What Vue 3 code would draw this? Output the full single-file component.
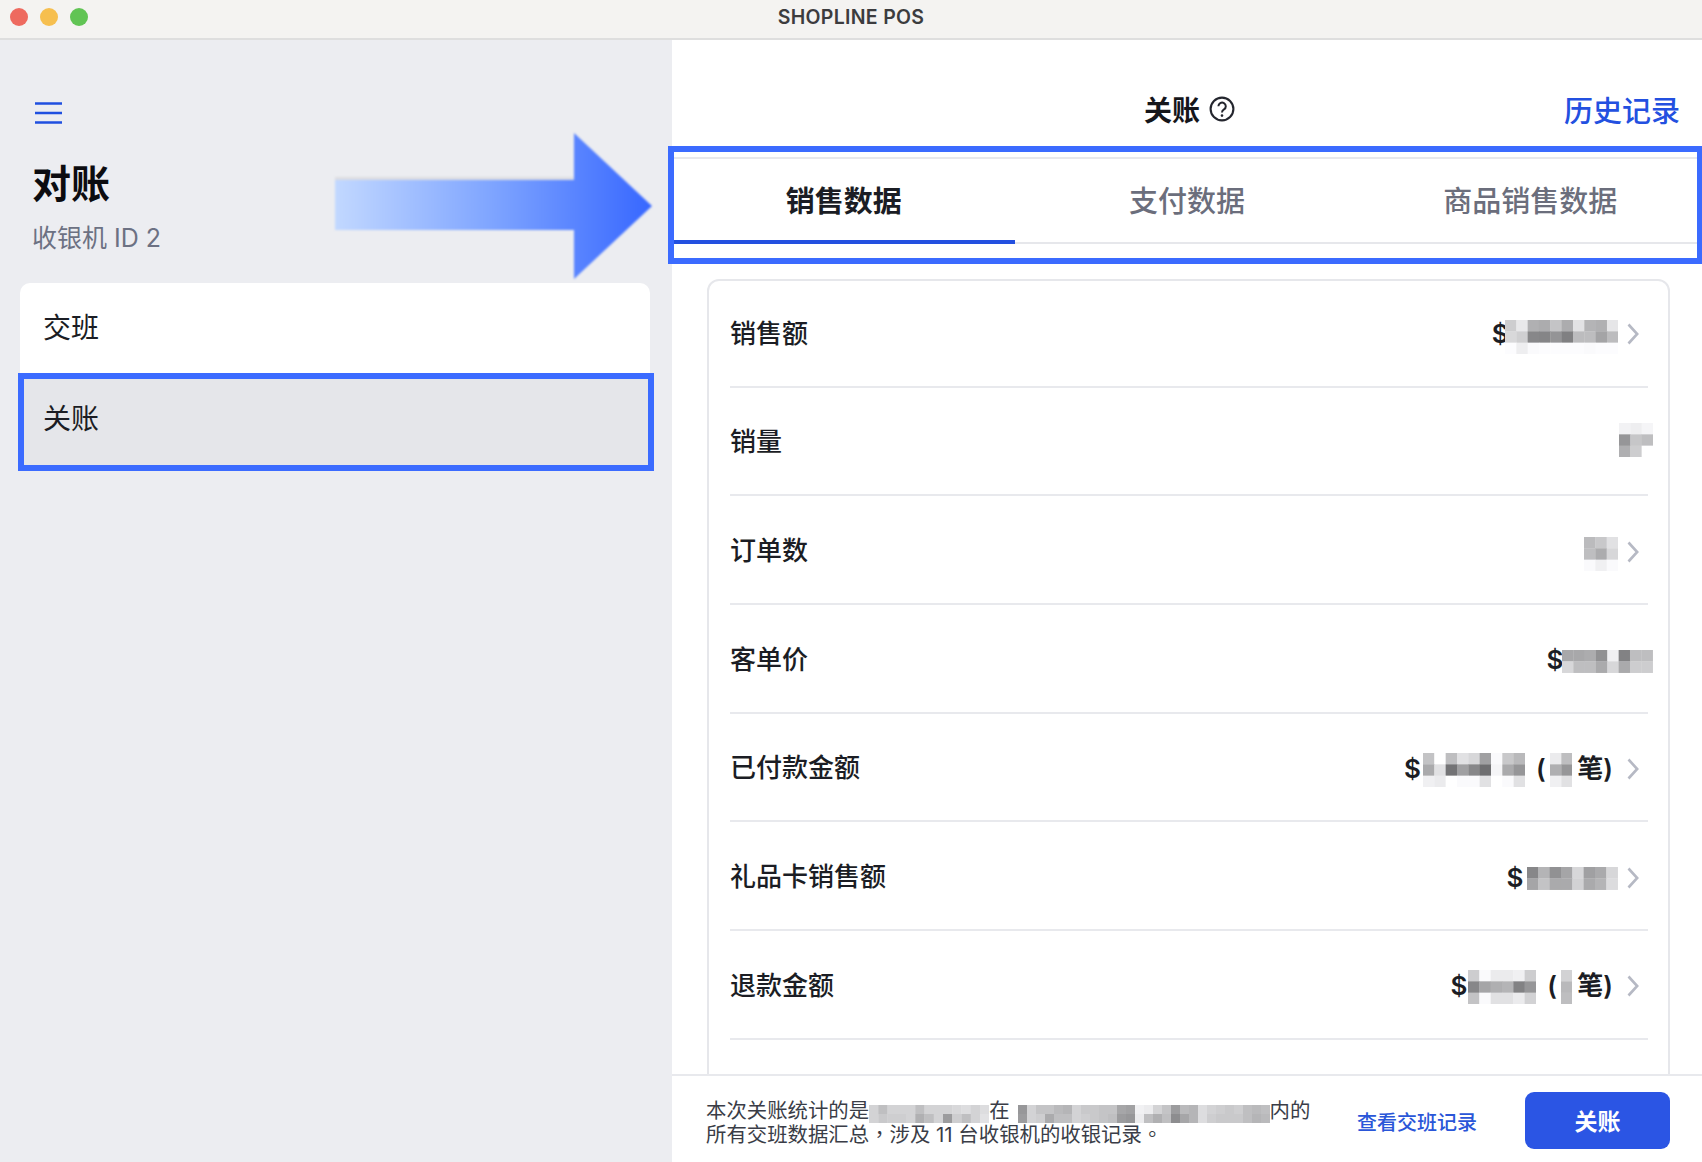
<script setup>
const CELL = 11.33
const FCELL = 9
const rowsData = [
  { label: '销售额', parts: [{ t: '$' }, { m: [[205,232,176,172,196,172,226,180,176,230],[216,207,135,133,148,128,188,189,164,188],[252,238,250,252,252,252,252,250,252,252]], ml: -4, dy: 3 }], arrow: true },
  { label: '销量', parts: [{ m: [[242,238,245],[150,198,190],[175,205,255]], dy: -3 }], arrow: false },
  { label: '订单数', parts: [{ m: [[187,200,225],[190,172,215],[250,240,250]], dy: 2 }], arrow: true },
  { label: '客单价', parts: [{ t: '$' }, { m: [[168,168,172,145,240,130,190,190],[215,190,190,170,215,170,205,205]], ml: -1, dy: 1 }], arrow: false },
  { label: '已付款金额', parts: [{ t: '$' }, { m: [[195,255,190,225,215,160,250,200,185],[170,225,115,160,135,110,245,170,150],[240,235,255,250,250,225,255,250,225]], ml: 2, dy: 1 }, { t: '(', ml: 11 }, { m: [[235,190],[175,150],[240,225]], ml: 4, dy: 1 }, { t: '笔)', ml: 5, tail: true }], arrow: true },
  { label: '礼品卡销售额', parts: [{ t: '$' }, { m: [[135,180,145,165,215,160,170,215],[165,195,170,170,210,170,180,220]], ml: 4, dy: 1 }], arrow: true },
  { label: '退款金额', parts: [{ t: '$' }, { m: [[205,250,235,235,240,205],[135,165,175,180,130,150],[195,250,225,225,235,210]], ml: 1, dy: 1 }, { t: '(', ml: 11 }, { m: [[210],[185],[190]], ml: 4, dy: 1 }, { t: '笔)', ml: 5, tail: true }], arrow: true }
]
const footA = [[225,205,225,225,225,205,225,225,225,230,235,225,235],[225,215,220,220,225,190,205,225,170,220,205,225,240]]
const footB = [[165,225,210,210,200,195,225,215,215,210,210,180,175,255,250,225,210,170,200,195,235,225,220,215,220,205,200,205],[170,225,220,185,205,205,225,220,215,210,205,170,165,250,205,190,205,155,180,195,235,220,215,215,215,205,195,200]]
const cells = (m, k = 0) => m.flatMap((row, y) => row.map((v, x) => ({ x, y, fill: `rgb(${v - k},${v - k},${v - k + 2})` })))
const tabs = ['销售数据', '支付数据', '商品销售数据']
</script>

<template>
  <div class="window">
    <header class="titlebar">
      <div class="lights"><i class="light red"></i><i class="light yellow"></i><i class="light green"></i></div>
      <span class="app-name">SHOPLINE POS</span>
    </header>
    <div class="body">
      <aside class="sidebar">
        <svg class="menu" width="28" height="22" viewBox="0 0 28 22"><path d="M0 1.5h27M0 11h27M0 20.5h27" stroke="#1f4fe0" stroke-width="2.6" fill="none"/></svg>
        <h1 class="side-title">对账</h1>
        <p class="side-sub">收银机 ID 2</p>
        <svg class="arrow" width="320" height="146" viewBox="0 0 320 146">
          <defs>
            <linearGradient id="ag" x1="0" x2="1" y1="0" y2="0">
              <stop offset="0" stop-color="#c2d8ff"/>
              <stop offset="0.5" stop-color="#7ea4ff"/>
              <stop offset="1" stop-color="#3767ff"/>
            </linearGradient>
          </defs>
          <rect x="2" y="44" width="240" height="4" fill="#dcdde2"/>
          <path d="M2 47H241V0L319 73 241 146V97H2Z" fill="url(#ag)"/>
        </svg>
        <nav class="side-card">
          <div class="side-item">交班</div>
          <div class="side-item active">关账<span class="mark"></span></div>
        </nav>
      </aside>
      <main class="main">
        <div class="top">
          <span></span>
          <div class="top-title">
            <span>关账</span>
            <svg width="26" height="26" viewBox="0 0 26 26"><circle cx="13" cy="13" r="11.4" fill="none" stroke="#24262e" stroke-width="2.1"/><path d="M9.4 10.2a3.7 3.7 0 1 1 5.6 3.2c-1.3.8-2 1.5-2 3" fill="none" stroke="#24262e" stroke-width="2"/><circle cx="13" cy="19.6" r="1.3" fill="#24262e"/></svg>
          </div>
          <a class="history">历史记录</a>
        </div>
        <div class="tabs">
          <div v-for="(t, i) in tabs" :key="t" class="tab" :class="{ on: i === 0 }">{{ t }}</div>
          <span class="mark"></span>
        </div>
        <div class="scroll">
          <section class="card">
            <div v-for="r in rowsData" :key="r.label" class="row">
              <span class="label">{{ r.label }}</span>
              <div class="value" :class="{ bare: !r.arrow }">
                <template v-for="(p, i) in r.parts" :key="i">
                  <span v-if="p.t" class="vtext" :class="{ tail: p.tail }" :style="{ marginLeft: (p.ml || 0) + 'px' }">{{ p.t }}</span>
                  <svg v-else class="mosaic" :width="p.m[0].length * CELL" :height="p.m.length * CELL" :style="{ marginLeft: (p.ml || 0) + 'px', top: (p.dy || 0) + 'px' }">
                    <rect v-for="c in cells(p.m)" :key="c.x + '-' + c.y" :x="c.x * CELL" :y="c.y * CELL" :width="CELL + 0.3" :height="CELL + 0.3" :fill="c.fill"/>
                  </svg>
                </template>
                <svg v-if="r.arrow" class="chev" width="12" height="22" viewBox="0 0 12 22"><path d="M1.5 1.5 10.2 11 1.5 20.5" fill="none" stroke="#b6b9c4" stroke-width="2.6"/></svg>
              </div>
            </div>
          </section>
        </div>
        <footer class="footer">
          <p class="note">本次关账统计的是<svg class="fm" :width="footA[0].length * FCELL + 3" height="18"><rect v-for="c in cells(footA, 14)" :key="c.x + '-' + c.y" :x="c.x * (FCELL + 0.25)" :y="c.y * FCELL" :width="FCELL + 0.5" :height="FCELL + 0.2" :fill="c.fill"/></svg>在<svg class="fm gap" :width="footB[0].length * FCELL" height="18"><rect v-for="c in cells(footB, 14)" :key="c.x + '-' + c.y" :x="c.x * FCELL" :y="c.y * FCELL" :width="FCELL + 0.2" :height="FCELL + 0.2" :fill="c.fill"/></svg>内的<br>所有交班数据汇总<span class="punc">，</span>涉及 11 台收银机的收银记录<span class="punc">。</span></p>
          <a class="shift-link">查看交班记录</a>
          <button class="close-btn">关账</button>
        </footer>
      </main>
    </div>
  </div>
</template>

<style scoped>
.window {
  width: 1702px;
  height: 1162px;
  display: flex;
  flex-direction: column;
  overflow: hidden;
  font-family: Inter, "Noto Sans CJK SC", sans-serif;
  color: #1b1d24;
  background: #fff;
}
.titlebar {
  height: 40px;
  box-sizing: border-box;
  flex: none;
  display: flex;
  align-items: center;
  justify-content: center;
  position: relative;
  background: #f4f3f1;
  border-bottom: 2px solid #dedede;
  padding-bottom: 5px;
}
.lights {
  position: absolute;
  left: 10px;
  top: 8px;
  display: flex;
  gap: 12px;
}
.light { width: 18px; height: 18px; border-radius: 50%; }
.red { background: #ee6a5f; }
.yellow { background: #f6bf4f; }
.green { background: #61c454; }
.app-name { font-size: 19.5px; font-weight: 600; color: #3c3c3e; letter-spacing: 0.3px; }
.body { flex: 1; display: flex; min-height: 0; }
.sidebar {
  width: 672px;
  flex: none;
  box-sizing: border-box;
  position: relative;
  background: #ecedf1;
  padding: 62px 22px 0 20px;
  display: flex;
  flex-direction: column;
  align-items: flex-start;
}
.menu { margin-left: 15px; }
.side-title {
  margin: 33px 0 0 12px;
  font-size: 39px;
  line-height: 54px;
  font-weight: 700;
  color: #0c0c10;
}
.side-sub {
  margin: 10px 0 0 12px;
  font-size: 25px;
  line-height: 34px;
  color: #6c7183;
}
.arrow {
  position: absolute;
  left: 333px;
  top: 93px;
  filter: blur(1px);
}
.side-card {
  width: 630px;
  margin-top: 28px;
  border-radius: 10px 10px 0 0;
  background: #fff;
}
.side-item {
  position: relative;
  height: 90px;
  line-height: 90px;
  padding-left: 23px;
  font-size: 28px;
  color: #1b1d24;
}
.side-item.active {
  height: 94px;
  line-height: 92px;
  background: #e5e6ea;
}
.side-item .mark {
  position: absolute;
  left: -2px;
  right: -4px;
  top: 0;
  bottom: -4px;
}
.mark {
  border: 6px solid #3b6bff;
  box-sizing: border-box;
  pointer-events: none;
}
.main { flex: 1; min-width: 0; display: flex; flex-direction: column; background: #fff; }
.top {
  height: 117px;
  box-sizing: border-box;
  flex: none;
  display: grid;
  grid-template-columns: 1fr auto 1fr;
  align-items: center;
  padding: 21px 22px 0;
}
.top-title {
  display: flex;
  align-items: center;
  gap: 9px;
  padding-left: 5px;
  font-size: 28px;
  font-weight: 700;
  color: #15161b;
}
.history {
  justify-self: end;
  font-size: 29px;
  font-weight: 500;
  color: #2350e0;
}
.tabs {
  position: relative;
  flex: none;
  height: 87px;
  display: flex;
  box-sizing: border-box;
  border-top: 2px solid #e8e8ec;
  border-bottom: 2px solid #e6e7eb;
}
.tabs .mark {
  position: absolute;
  left: -4px;
  right: 0;
  top: -13px;
  bottom: -22px;
  border-right-width: 5px;
}
.tab {
  flex: 1;
  text-align: center;
  font-size: 29px;
  line-height: 86px;
  font-weight: 500;
  color: #6b6e7c;
  margin-bottom: -2px;
}
.tab.on {
  color: #1b1d24;
  font-weight: 700;
  border-bottom: 4px solid #2350e0;
  box-sizing: border-box;
}
.scroll { flex: 1; min-height: 0; overflow: hidden; padding: 35px 32px 0 35px; }
.card {
  height: 900px;
  box-sizing: border-box;
  border: 2px solid #e6e7eb;
  border-radius: 12px;
  padding: 0 20px 0 21px;
}
.row {
  height: 108.67px;
  box-sizing: border-box;
  display: flex;
  align-items: center;
  justify-content: space-between;
  border-bottom: 2px solid #e8e9ed;
  padding-bottom: 2px;
}
.row:first-child { margin-top: -2px; }
.label { font-size: 26px; font-weight: 500; color: #1b1d24; }
.value { position: relative; top: 3px; display: flex; align-items: center; margin-right: 9px; }
.value.bare { margin-right: -5px; }
.vtext { font-size: 26px; font-weight: 600; color: #1b1d24; line-height: 34px; }
.vtext.tail { margin-right: 5px; }
.mosaic { position: relative; display: block; flex: none; filter: blur(0.6px); }
.chev { flex: none; margin-left: 9px; display: block; }
.footer {
  flex: none;
  height: 88px;
  box-sizing: border-box;
  border-top: 2px solid #e8e9ed;
  padding: 16px 32px 0 34px;
  display: flex;
  align-items: flex-start;
  background: #fff;
}
.note {
  width: 650px;
  margin: 8px 0 0;
  font-size: 20.4px;
  line-height: 22px;
  color: #3a3d47;
  white-space: nowrap;
}
.punc { font-family: "Noto Sans CJK TC", sans-serif; }
.fm { vertical-align: 1px; margin-bottom: -6px; filter: blur(0.5px); }
.fm.gap { margin-left: 8px; }
.shift-link {
  margin: 15px 0 0 auto;
  font-size: 20px;
  font-weight: 500;
  color: #2a56d8;
}
.close-btn {
  margin-left: 48px;
  width: 145px;
  height: 57px;
  border: none;
  border-radius: 9px;
  padding-bottom: 3px;
  background: #2b55e4;
  color: #fff;
  font-family: inherit;
  font-size: 23px;
  font-weight: 700;
}
</style>
